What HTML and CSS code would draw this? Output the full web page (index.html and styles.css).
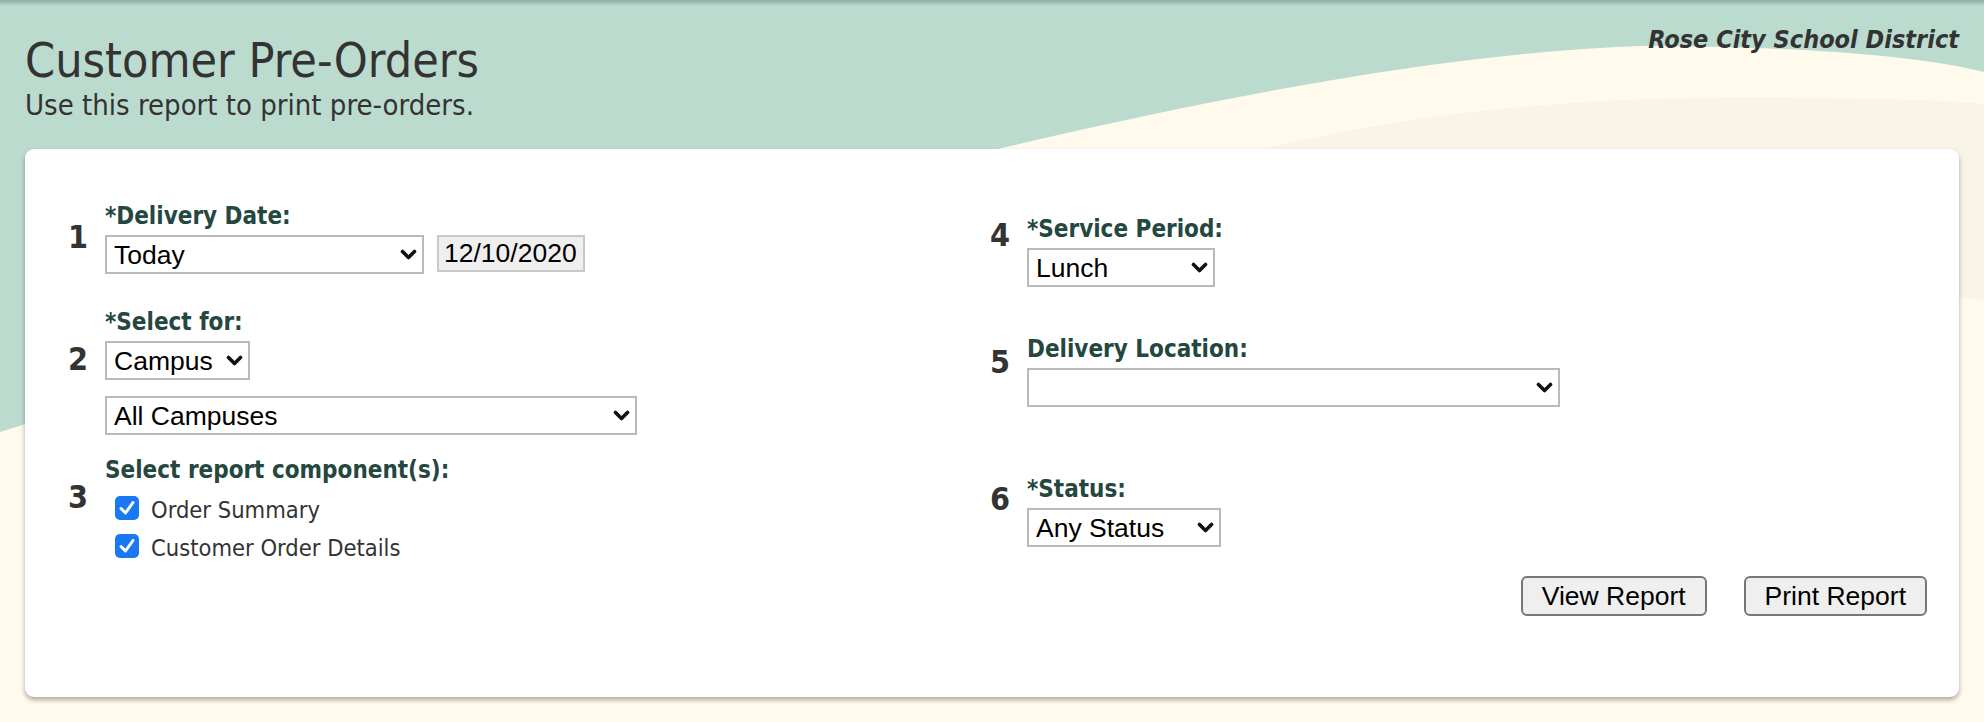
FILE: index.html
```html
<!DOCTYPE html>
<html lang="en">
<head>
<meta charset="utf-8">
<title>Customer Pre-Orders</title>
<link rel="stylesheet" href="styles.css">
</head>
<body>
<div class="backdrop">
  <svg viewBox="0 0 1984 722" preserveAspectRatio="none" width="1984" height="722">
    <rect x="0" y="0" width="1984" height="722" fill="#bcdbcf"/>
    <path d="M0,432 C650,230 1250,60 1640,46 C1800,46 1920,56 1984,72 L1984,722 L0,722 Z" fill="#fffaec"/>
    <path d="M1100,195 C1300,128 1500,100 1700,98 C1850,97 1940,100 1984,104 L1984,300 C1700,270 1400,310 1100,420 Z" fill="#f8f4e6"/>
  </svg>
</div>
<div class="page">
  <header class="header">
    <div class="titles">
      <h1 class="title">Customer Pre-Orders</h1>
      <p class="subtitle">Use this report to print pre-orders.</p>
    </div>
    <div class="district">Rose City School District</div>
  </header>

  <main class="card">
    <div class="col col-left">
      <div class="item">
        <div class="num num-1">1</div>
        <div class="body">
          <div class="label">*Delivery Date:</div>
          <div class="row">
            <span class="select-wrap"><select class="select w-today"><option>Today</option></select><svg class="chev" viewBox="0 0 17 11" width="17" height="11"><polyline points="2.5,2.5 8.5,8.5 14.5,2.5" fill="none" stroke="#111" stroke-width="3.6" stroke-linecap="round" stroke-linejoin="round"/></svg></span>
            <input class="datebox" type="text" value="12/10/2020" readonly>
          </div>
        </div>
      </div>

      <div class="item item-2">
        <div class="num num-2">2</div>
        <div class="body">
          <div class="label">*Select for:</div>
          <span class="select-wrap"><select class="select w-campus"><option>Campus</option></select><svg class="chev" viewBox="0 0 17 11" width="17" height="11"><polyline points="2.5,2.5 8.5,8.5 14.5,2.5" fill="none" stroke="#111" stroke-width="3.6" stroke-linecap="round" stroke-linejoin="round"/></svg></span>
          <div class="sub-row">
            <span class="select-wrap"><select class="select w-all"><option>All Campuses</option></select><svg class="chev" viewBox="0 0 17 11" width="17" height="11"><polyline points="2.5,2.5 8.5,8.5 14.5,2.5" fill="none" stroke="#111" stroke-width="3.6" stroke-linecap="round" stroke-linejoin="round"/></svg></span>
          </div>
        </div>
      </div>

      <div class="item item-3">
        <div class="num num-3">3</div>
        <div class="body">
          <div class="label">Select report component(s):</div>
          <div class="checks">
            <label class="check"><span class="box"><svg viewBox="0 0 24 24" width="24" height="24"><polyline points="6,12.5 10.5,17 18,6.5" fill="none" stroke="#fff" stroke-width="3" stroke-linecap="round" stroke-linejoin="round"/></svg></span>Order Summary</label>
            <label class="check"><span class="box"><svg viewBox="0 0 24 24" width="24" height="24"><polyline points="6,12.5 10.5,17 18,6.5" fill="none" stroke="#fff" stroke-width="3" stroke-linecap="round" stroke-linejoin="round"/></svg></span>Customer Order Details</label>
          </div>
        </div>
      </div>
    </div>

    <div class="col col-right">
      <div class="item item-4">
        <div class="num num-4">4</div>
        <div class="body">
          <div class="label">*Service Period:</div>
          <span class="select-wrap"><select class="select w-lunch"><option>Lunch</option></select><svg class="chev" viewBox="0 0 17 11" width="17" height="11"><polyline points="2.5,2.5 8.5,8.5 14.5,2.5" fill="none" stroke="#111" stroke-width="3.6" stroke-linecap="round" stroke-linejoin="round"/></svg></span>
        </div>
      </div>

      <div class="item item-5">
        <div class="num num-5">5</div>
        <div class="body">
          <div class="label">Delivery Location:</div>
          <span class="select-wrap"><select class="select w-location"><option></option></select><svg class="chev" viewBox="0 0 17 11" width="17" height="11"><polyline points="2.5,2.5 8.5,8.5 14.5,2.5" fill="none" stroke="#111" stroke-width="3.6" stroke-linecap="round" stroke-linejoin="round"/></svg></span>
        </div>
      </div>

      <div class="item item-6">
        <div class="num num-6">6</div>
        <div class="body">
          <div class="label">*Status:</div>
          <span class="select-wrap"><select class="select w-status"><option>Any Status</option></select><svg class="chev" viewBox="0 0 17 11" width="17" height="11"><polyline points="2.5,2.5 8.5,8.5 14.5,2.5" fill="none" stroke="#111" stroke-width="3.6" stroke-linecap="round" stroke-linejoin="round"/></svg></span>
        </div>
      </div>

      <div class="actions">
        <button class="btn" type="button">View Report</button>
        <button class="btn" type="button">Print Report</button>
      </div>
    </div>
  </main>
</div>
</body>
</html>
```

FILE: styles.css
```css
* { box-sizing: border-box; }

html, body {
  margin: 0;
  padding: 0;
  width: 1984px;
  height: 722px;
  overflow: hidden;
}

body {
  position: relative;
  font-family: "DejaVu Sans Condensed", "DejaVu Sans", sans-serif;
  color: #333;
  background: #bcdbcf;
}

.backdrop {
  position: absolute;
  inset: 0;
  z-index: 0;
}
.backdrop svg { display: block; }
.backdrop::after {
  content: "";
  position: absolute;
  left: 0; right: 0; top: 0;
  height: 6px;
  background: linear-gradient(rgba(60, 90, 80, 0.35), rgba(60, 90, 80, 0));
}

.page {
  position: relative;
  z-index: 1;
  padding: 0 25px;
}

.header {
  display: flex;
  justify-content: space-between;
  align-items: flex-start;
}

.title {
  margin: 32px 0 0;
  font-size: 48px;
  line-height: 56px;
  font-weight: normal;
  color: #333;
}

.subtitle {
  margin: 1px 0 0;
  font-size: 29px;
  line-height: 33px;
  color: #333;
}

.district {
  margin-top: 25px;
  font-size: 25px;
  line-height: 29px;
  font-weight: bold;
  font-style: italic;
  color: #333;
}

.card {
  margin-top: 27px;
  height: 548px;
  background: #fff;
  border-radius: 9px;
  box-shadow: 0 3px 5px rgba(0, 0, 0, 0.32);
  padding: 53px 32px 0 26px;
  display: grid;
  grid-template-columns: 922px 1fr;
}

.col { display: flex; flex-direction: column; }

.item { display: flex; align-items: flex-start; }
.item-2 { margin-top: 34px; }
.item-3 { margin-top: 21px; }
.item-4 { margin-top: 13px; }
.item-5 { margin-top: 48px; }
.item-6 { margin-top: 68px; }

.num {
  width: 54px;
  flex: none;
  text-align: center;
  font-size: 32px;
  line-height: 36px;
  font-weight: bold;
  color: #333;
}
.num-1 { margin-top: 17px; }
.num-2 { margin-top: 33px; }
.num-3 { margin-top: 23px; }
.num-4 { margin-top: 2px; }
.num-5 { margin-top: 9px; }
.num-6 { margin-top: 6px; }

.body { display: flex; flex-direction: column; align-items: flex-start; }

.label {
  font-size: 24px;
  line-height: 28px;
  font-weight: bold;
  color: #24473f;
  margin-bottom: 5px;
}

.row { display: flex; align-items: flex-start; gap: 13px; }
.sub-row { margin-top: 16px; }

.select-wrap { position: relative; display: inline-block; }
.select {
  display: block;
  appearance: none;
  -webkit-appearance: none;
  height: 39px;
  border: 2px solid #bababa;
  border-radius: 0;
  background: #fff;
  color: #000;
  font-family: "Liberation Sans", Arial, sans-serif;
  font-size: 26.5px;
  padding: 0 34px 0 7px;
  margin: 0;
}
.chev {
  position: absolute;
  right: 7px;
  top: 14px;
  pointer-events: none;
}

.w-today { width: 319px; }
.w-campus { width: 145px; }
.w-all { width: 532px; }
.w-lunch { width: 188px; }
.w-location { width: 533px; }
.w-status { width: 194px; }

.datebox {
  width: 148px;
  height: 37px;
  margin: 0;
  border: 2px solid #c9c9c9;
  background: #efefef;
  color: #000;
  font-family: "Liberation Sans", Arial, sans-serif;
  font-size: 26.5px;
  padding: 0 5px;
  outline: none;
}

.checks { display: flex; flex-direction: column; }
.check {
  display: flex;
  align-items: center;
  height: 38px;
  font-size: 23.5px;
  padding-top: 4px;
  color: #333;
}
.box {
  width: 24px;
  height: 24px;
  margin: -4px 12px 0 10px;
  border-radius: 5px;
  background: #1a78f2;
  display: inline-flex;
}

.actions {
  margin-top: 29px;
  display: flex;
  justify-content: flex-end;
  gap: 37px;
}

.btn {
  height: 40px;
  padding: 0 19px;
  border: 2px solid #777;
  border-radius: 6px;
  background: #efefef;
  color: #000;
  font-family: "Liberation Sans", Arial, sans-serif;
  font-size: 26.5px;
  line-height: 1;
}
```
